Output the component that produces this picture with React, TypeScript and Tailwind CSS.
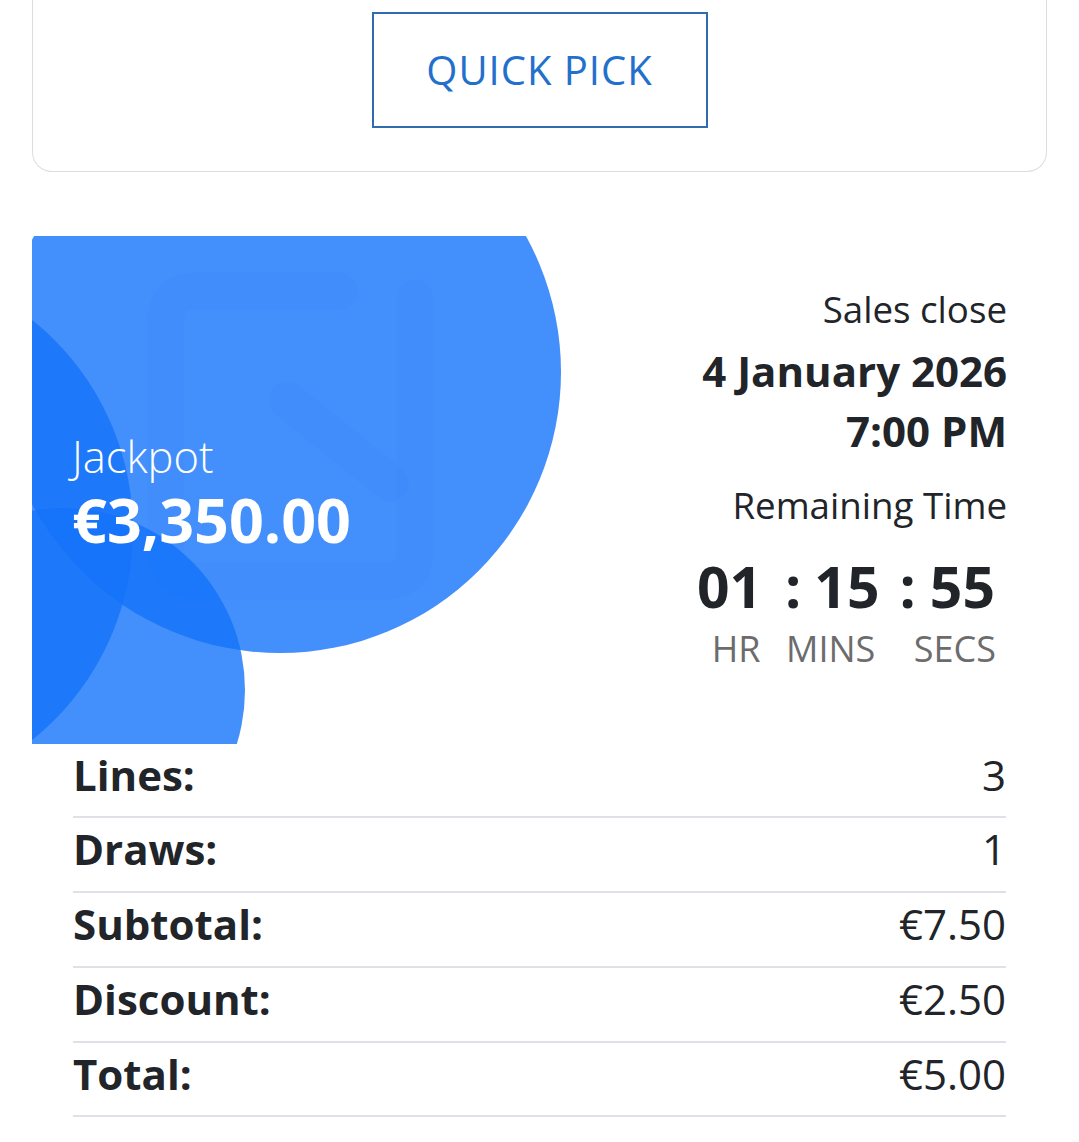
const rows = [
  { label: 'Lines:', value: '3' },
  { label: 'Draws:', value: '1' },
  { label: 'Subtotal:', value: '€7.50' },
  { label: 'Discount:', value: '€2.50' },
  { label: 'Total:', value: '€5.00' },
]

function JackpotArt() {
  return (
    <>
      {/* big circle */}
      <div className="absolute left-[-33px] top-[-145px] h-[562px] w-[562px] rounded-full bg-[#1473fa]/80" />
      {/* left circle */}
      <div className="absolute left-[-437px] top-[25px] h-[538px] w-[538px] rounded-full bg-[#1473fa]/80" />
      {/* bottom circle */}
      <div className="absolute left-[-151px] top-[272px] h-[364px] w-[364px] rounded-full bg-[#1473fa]/80" />
      {/* faint logo watermark */}
      <svg
        className="absolute left-0 top-0 h-[508px] w-[560px]"
        viewBox="0 0 560 508"
        fill="none"
        stroke="#0a5ff5"
        strokeOpacity="0.025"
        strokeWidth="37"
        strokeLinecap="round"
        strokeLinejoin="round"
      >
        <path d="M307 55 H164 Q134 55 134 85 V315 Q134 345 164 345 H353 Q383 345 383 315 V62" />
        <path d="M255 164 L358 247" />
      </svg>
    </>
  )
}

export default function App() {
  return (
    <div className="min-h-screen bg-white font-['Open_Sans',sans-serif] text-[#212529]">
      <div className="px-[32px]">
        <div className="flex justify-center rounded-b-[20px] border-x-[1.5px] border-b-[1.5px] border-[#dddddd] pt-[12px] pb-[42.5px]">
          <button className="flex h-[116px] w-[336px] items-center justify-center border-2 border-[#2f6db0] text-[40px] font-normal tracking-[1px] text-[#2270cc]">
            QUICK PICK
          </button>
        </div>

        <section className="relative mt-[64px] flex h-[508px] overflow-hidden">
          <JackpotArt />

          <div className="relative flex flex-col justify-center pl-[40px] pt-[8px] text-white">
            <p className="text-[43.5px] font-light leading-[50px]">Jackpot</p>
            <p className="mt-[2px] text-[61px] font-bold leading-[72px]">€3,350.00</p>
          </div>

          <div className="relative ml-auto flex flex-col items-end pr-[40px] pt-[46px] text-right">
            <p className="text-[36.7px] leading-[54px]">Sales close</p>
            <p className="mt-[5.5px] text-[42px] font-bold leading-[60px]">
              <span className="block">4 January 2026</span>
              <span className="block">7:00 PM</span>
            </p>
            <p className="mt-[16.5px] text-[36.7px] leading-[54px]">Remaining Time</p>
            <div className="mt-[21.7px] flex items-baseline pr-[12px] text-[57px] font-bold leading-[67px]">
              <span>01</span>
              <span className="ml-[23px] mr-[13px]">:</span>
              <span>15</span>
              <span className="ml-[20px] mr-[14px]">:</span>
              <span>55</span>
            </div>
            <div className="mt-[2px] flex pr-[11px] text-[36px] leading-[54px] text-[#6c6c6c]">
              <span>HR</span>
              <span className="ml-[25.5px]">MINS</span>
              <span className="ml-[38.5px]">SECS</span>
            </div>
          </div>
        </section>

        <div className="px-[41px]">
          {rows.map((row) => (
            <div
              key={row.label}
              className="flex items-center justify-between border-b-2 border-[#dee2e6] pt-[1px] pb-[11.75px] text-[42px] leading-[60px]"
            >
              <span className="font-bold">{row.label}</span>
              <span>{row.value}</span>
            </div>
          ))}
        </div>
      </div>
    </div>
  )
}
